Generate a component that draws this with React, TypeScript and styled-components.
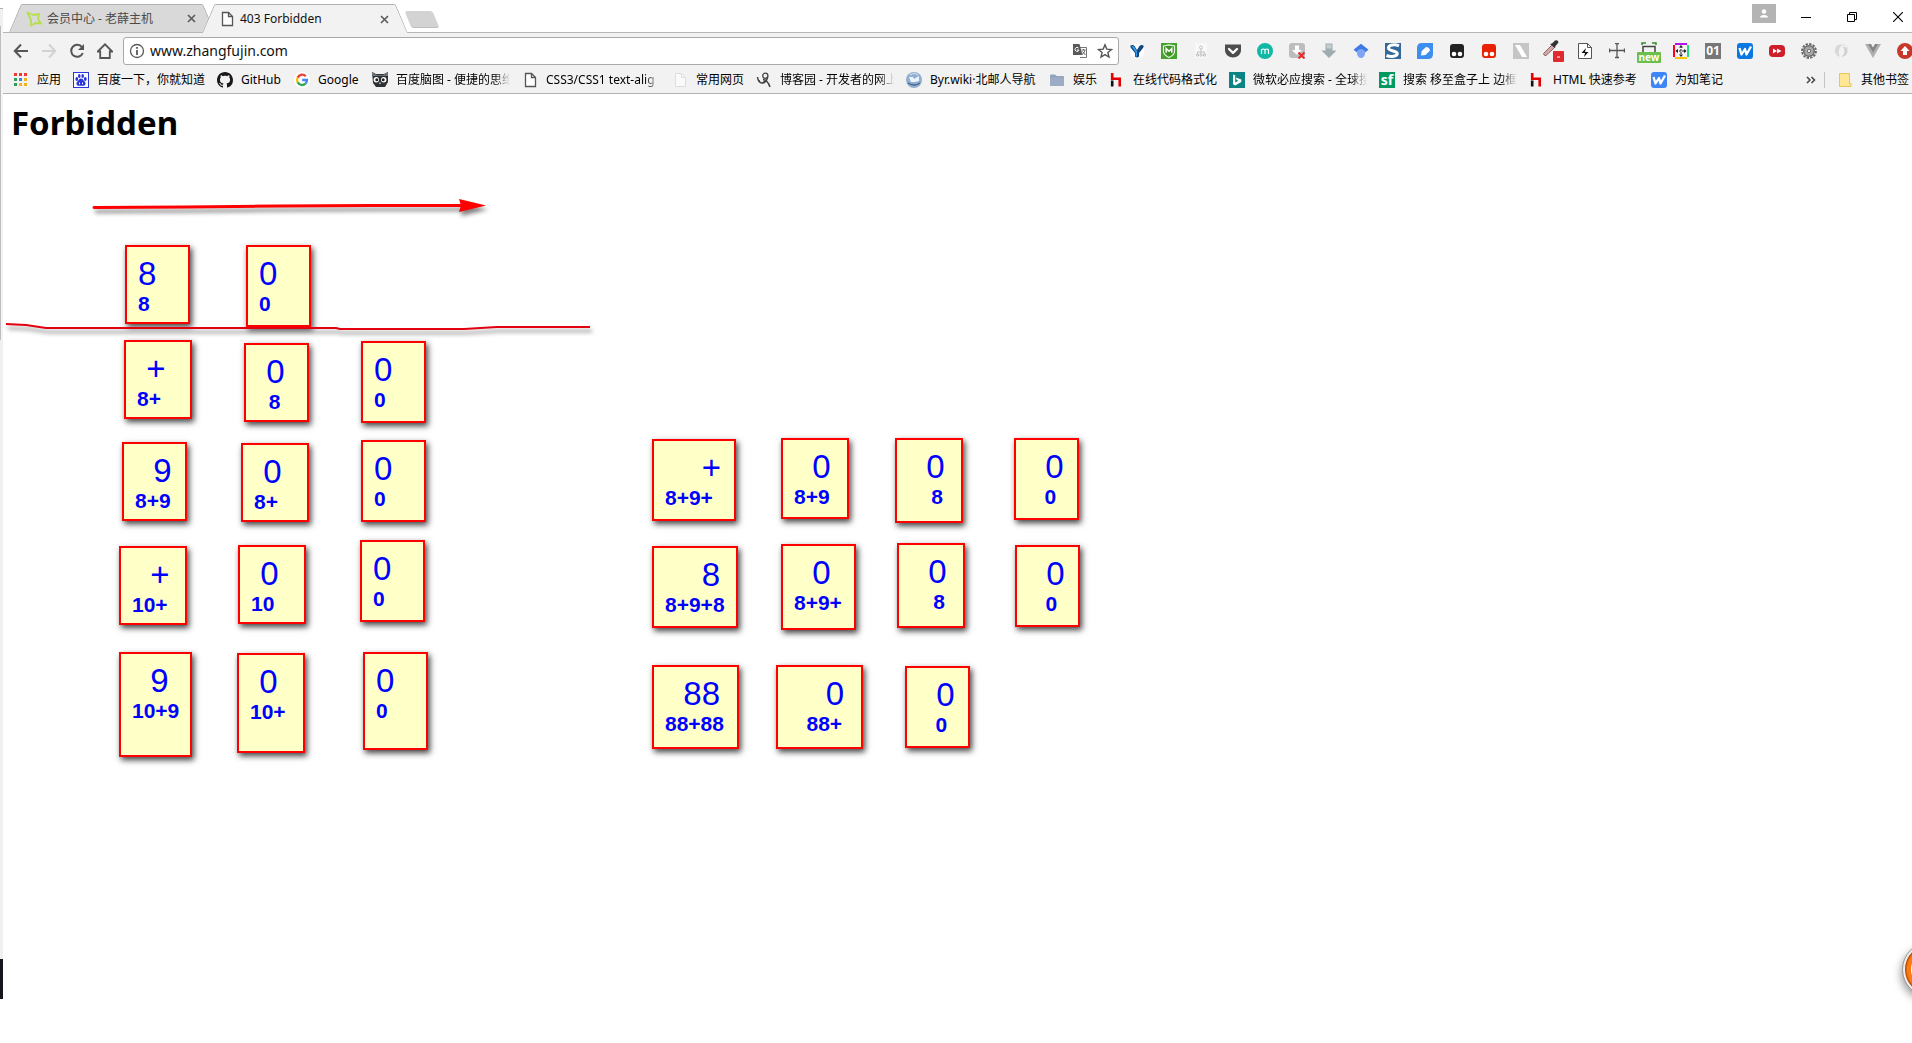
import React from "react";
import styled, { createGlobalStyle, css } from "styled-components";

const uiFont = `"Noto Sans", "Noto Sans CJK SC", sans-serif`;

const GlobalStyle = createGlobalStyle`
  * { box-sizing: border-box; }
  body { margin: 0; background: #fff; font-family: ${uiFont}; font-size: 12px; color: #000; }
  button { font: inherit; color: inherit; background: none; border: 0; padding: 0; }
`;

/* ---------- window frame ---------- */

const Page = styled.div`
  position: relative;
  display: flex;
  min-height: 100vh;
  overflow: hidden;
`;

const LeftEdge = styled.div`
  flex: none;
  width: 3px;
  display: flex;
  flex-direction: column;
`;

const EdgePart = styled.div<{ $h: number; $color: string; $line?: boolean }>`
  height: ${(p) => p.$h}px;
  background: ${(p) => p.$color};
  ${(p) => p.$line && css`border-left: 1px solid #bdbdbd;`}
`;

const Browser = styled.div`
  flex: 1;
  min-width: 0;
`;

/* ---------- tab strip ---------- */

const TabStrip = styled.header`
  display: flex;
  align-items: flex-start;
  height: 33px;
  padding: 4px 9px 0 6px;
  border-bottom: 1px solid #b6b6b6;
`;

const Tab = styled.div<{ $active?: boolean }>`
  position: relative;
  isolation: isolate;
  z-index: ${(p) => (p.$active ? 2 : 1)};
  display: flex;
  align-items: center;
  width: 205px;
  height: ${(p) => (p.$active ? 29 : 28)}px;
  padding: 1px 18px 0 17px;
  color: ${(p) => (p.$active ? "#111" : "#4a4a4a")};
  & + & { margin-left: -12px; }
  &::before, &::after {
    content: "";
    position: absolute;
    z-index: -1;
    top: 0;
    bottom: 0;
    width: 50%;
    background: ${(p) => (p.$active ? "#f2f2f2" : "#d9d9d9")};
    border-top: 1px solid #b0b0b0;
  }
  &::before {
    left: 0;
    border-left: 1px solid #a9a9a9;
    border-top-left-radius: 2px;
    transform-origin: bottom left;
    transform: skewX(-23deg);
  }
  &::after {
    right: 0;
    border-right: 1px solid #a9a9a9;
    border-top-right-radius: 2px;
    transform-origin: bottom right;
    transform: skewX(23deg);
  }
`;

const TabTitle = styled.span`
  flex: 1;
  margin-left: 5px;
  line-height: 18px;
  white-space: nowrap;
`;

const TabClose = styled.button`
  display: flex;
  color: #5e5e5e;
`;

const NewTab = styled.button`
  width: 28px;
  height: 17px;
  margin: 7px 0 0 1px;
  background: #d3d3d3;
  border-bottom: 1px solid #bcbcbc;
  border-radius: 3px;
  transform: skewX(22deg);
`;

const WindowControls = styled.div`
  display: flex;
  align-items: flex-start;
  margin-left: auto;
`;

const UserButton = styled.button`
  display: flex;
  align-items: center;
  justify-content: center;
  width: 24px;
  height: 19px;
  margin-right: 25px;
  background: #b4b4b4;
`;

const WindowButtons = styled.div`
  display: flex;
  gap: 36px;
`;

const WindowButton = styled.button`
  display: flex;
  padding-top: 8px;
`;

/* ---------- toolbar ---------- */

const Toolbar = styled.div`
  display: flex;
  height: 32px;
  padding: 4px 0 0 4px;
  background: #f2f2f2;
`;

const NavButton = styled.button`
  display: flex;
  align-items: center;
  justify-content: center;
  width: 28px;
`;

const AddressBar = styled.div`
  flex: 1;
  display: flex;
  align-items: center;
  height: 28px;
  margin-left: 4px;
  margin-right: 2px;
  padding: 0 5px;
  background: #fff;
  border: 1px solid #a9a9a9;
  border-radius: 3px;
`;

const AddressInput = styled.input`
  flex: 1;
  min-width: 0;
  height: 24px;
  padding: 0;
  margin-left: 5px;
  border: 0;
  outline: 0;
  background: transparent;
  font: 14px/24px "Noto Sans", sans-serif;
  color: #111;
`;

const AddressAction = styled.button`
  display: flex;
  margin-left: 9px;
`;

const Extensions = styled.div`
  display: flex;
  margin-right: -9px;
`;

const ExtensionButton = styled.button`
  flex: none;
  display: flex;
  align-items: center;
  justify-content: center;
  width: 32px;
`;

/* ---------- bookmarks ---------- */

const BookmarkBar = styled.nav`
  display: flex;
  align-items: center;
  gap: 12px;
  height: 29px;
  padding: 1px 0 0 10px;
  background: #f2f2f2;
  border-bottom: 1px solid #b3b3b3;
`;

const Bookmark = styled.a`
  flex: none;
  display: flex;
  align-items: center;
  gap: 8px;
  color: #000;
  text-decoration: none;
`;

const BookmarkLabel = styled.span<{ $w: number }>`
  width: ${(p) => p.$w}px;
  line-height: 18px;
  white-space: nowrap;
  ${(p) => p.$w > 112 && css`
    overflow: hidden;
    mask-image: linear-gradient(to right, #000 86%, transparent 100%);
  `}
`;

const MoreButton = styled.button`
  display: flex;
  margin-left: auto;
  margin-right: -4px;
`;

const Divider = styled.span`
  width: 1px;
  height: 16px;
  background: #c4c4c4;
`;

/* ---------- page content ---------- */

const Content = styled.main`
  padding: 5px 8px;
`;

const Title = styled.h1`
  margin: 0;
  font: bold 33px/48px "Noto Sans", sans-serif;
`;

const AnnotationLayer = styled.div`
  position: absolute;
  inset: 0;
  pointer-events: none;
`;

const Strokes = styled.svg`
  position: absolute;
  left: 0;
  top: 0;
  filter: drop-shadow(2px 4px 2px rgba(0, 0, 0, 0.5));
`;

const Card = styled.div<{ $x: number; $y: number; $w: number; $h: number }>`
  position: absolute;
  left: ${(p) => p.$x}px;
  top: ${(p) => p.$y}px;
  width: ${(p) => p.$w}px;
  height: ${(p) => p.$h}px;
  padding: 9px 11px;
  border: 2px solid #f00;
  background: #ffffc8;
  box-shadow: 2px 3px 6px rgba(0, 0, 0, 0.75);
  color: #00f;
  font-family: "Liberation Sans", sans-serif;
  white-space: pre;
`;

const Current = styled.div`
  font-size: 33px;
  line-height: 36px;
`;

const History = styled.div`
  font-size: 21px;
  font-weight: bold;
  line-height: 24px;
`;

const FloatingBall = styled.button`
  position: absolute;
  right: -44px;
  top: 943px;
  width: 53px;
  height: 53px;
  border: 2px solid #eee;
  border-radius: 50%;
  outline: 1px solid #999;
  background: radial-gradient(circle, #fff 0 18px, #ff7a0f 19px 22px, #b94d00 24px);
  box-shadow: -2px 4px 9px rgba(0, 0, 0, 0.4);
`;

/* ---------- icons ---------- */

const Icon = ({ children, size = 16, w, h }: { children: React.ReactNode; size?: number; w?: number; h?: number }) => (
  <svg width={w ?? size} height={h ?? size} viewBox={`0 0 ${w ?? size} ${h ?? size}`} fill="none" aria-hidden="true">
    {children}
  </svg>
);

const PageIcon = ({ pale }: { pale?: boolean }) => (
  <Icon>
    <path d="M3.5 1.5h6l4 4v9h-10z" fill={pale ? "#fafafa" : "#fff"} stroke={pale ? "#dedede" : "#555"} strokeWidth={pale ? 1 : 1.3} />
    <path d="M9.5 1.5v4h4" stroke={pale ? "#dedede" : "#555"} strokeWidth={pale ? 1 : 1.3} />
  </Icon>
);

const CloseGlyph = () => (
  <Icon size={9}><path d="M1 1l7 7M8 1L1 8" stroke="currentColor" strokeWidth="1.7" /></Icon>
);

const HIcon = () => (
  <Icon>
    <path d="M3.2 1v7" stroke="#e60000" strokeWidth="2.6" />
    <path d="M2 6.800h8.700v7.700" stroke="#e60000" strokeWidth="2.6" />
    <path d="M3.2 8.5V14.500" stroke="#111" strokeWidth="2.6" />
  </Icon>
);

const WIcon = ({ dark }: { dark?: boolean }) => (
  <Icon>
    <rect width="16" height="16" rx="3" fill={dark ? "#0a78e0" : "#3e86f7"} />
    <path d="M2.5 5l2 6.500L8 6l1.500 5.500L14 3.500" stroke="#fff" strokeWidth="2.300" strokeLinejoin="round" />
  </Icon>
);

const FolderIcon = ({ yellow }: { yellow?: boolean }) =>
  yellow ? (
    <Icon>
      <path d="M2.500 1.500h10v10h1.500v3h-11.500z" fill="#ffe694" stroke="#e6c55a" />
    </Icon>
  ) : (
    <Icon>
      <path d="M1 3.500q0-1 1-1h4l1.500 1.500H14q1 0 1 1v8q0 1-1 1H2q-1 0-1-1z" fill="#93a3bd" />
      <path d="M1 5.500h14v7.500q0 1-1 1H2q-1 0-1-1z" fill="#9cacc5" />
    </Icon>
  );

const bookmarks: { label: string; w: number; icon: React.ReactNode }[] = [
  {
    label: "应用", w: 24,
    icon: (
      <Icon>
        {["#ee3a32", "#ee3a32", "#ee3a32", "#2f9e58", "#3b83ee", "#f3b51d", "#2f9e58", "#f3b51d", "#f3b51d"].map((c, i) => (
          <rect key={i} x={1 + (i % 3) * 5} y={1 + Math.floor(i / 3) * 5} width="3" height="3" fill={c} />
        ))}
      </Icon>
    ),
  },
  {
    label: "百度一下，你就知道", w: 108,
    icon: (
      <Icon>
        <rect x=".5" y=".5" width="15" height="15" fill="#fff" stroke="#2b35dc" />
        <g fill="#2b35dc">
          <ellipse cx="3.800" cy="7" rx="1.400" ry="1.900" /><ellipse cx="6.300" cy="4" rx="1.300" ry="1.900" />
          <ellipse cx="9.700" cy="4" rx="1.300" ry="1.900" /><ellipse cx="12.300" cy="7" rx="1.400" ry="1.900" />
          <path d="M8 6.500c2 0 2.400 2 3.800 3.300 1.500 1.500.6 4-1.400 4H5.600c-2 0-2.900-2.500-1.400-4C5.600 8.500 6 6.500 8 6.500z" />
        </g>
        <path d="M6.500 10.500v1.700M9.500 10.500v1.700" stroke="#fff" />
      </Icon>
    ),
  },
  {
    label: "GitHub", w: 41,
    icon: (
      <Icon>
        <path fill="#1b1817" d="M8 0C3.580 0 0 3.580 0 8c0 3.540 2.290 6.530 5.470 7.590.4.070.55-.17.55-.38 0-.19-.010-.82-.010-1.490-2.010.37-2.530-.49-2.690-.94-.09-.23-.48-.94-.82-1.130-.28-.15-.68-.52-.010-.53.63-.010 1.080.58 1.230.82.72 1.210 1.870.87 2.330.66.070-.52.28-.87.510-1.070-1.780-.2-3.640-.89-3.640-3.950 0-.87.31-1.590.82-2.150-.080-.2-.36-1.020.080-2.120 0 0 .67-.21 2.200.82.64-.18 1.320-.27 2-.27s1.360.09 2 .27c1.530-1.040 2.200-.82 2.200-.82.44 1.100.16 1.920.08 2.120.51.56.82 1.270.82 2.150 0 3.070-1.870 3.750-3.650 3.950.29.25.54.73.54 1.480 0 1.070-.010 1.930-.010 2.200 0 .21.15.46.55.38A8.010 8.010 0 0016 8c0-4.420-3.580-8-8-8z" />
      </Icon>
    ),
  },
  {
    label: "Google", w: 42,
    icon: (
      <Icon>
        <circle cx="8" cy="8" r="8" fill="#fff" />
        <g strokeWidth="2.300">
          <path d="M11.800 4.200A5 5 0 003.600 5.700" stroke="#ea4335" />
          <path d="M3.600 5.700a5 5 0 000 4.600" stroke="#fbbc05" />
          <path d="M3.600 10.300a5 5 0 007.900 1.300" stroke="#34a853" />
          <path d="M11.500 11.600A5 5 0 0013 8H8.200" stroke="#4285f4" />
        </g>
      </Icon>
    ),
  },
  {
    label: "百度脑图 - 便捷的思维", w: 114,
    icon: (
      <Icon>
        <path d="M0 0l4 2h8l4-2v10l-3 5H4L1 11z" fill="#2f3235" />
        <path d="M0 0l5 3h6l5-3v4H0z" fill="#6b7378" />
        <circle cx="4.300" cy="7.800" r="2.700" fill="#fff" /><circle cx="11.700" cy="7.800" r="2.700" fill="#fff" />
        <circle cx="4.800" cy="7.800" r="1.500" fill="#222" /><circle cx="11.200" cy="7.800" r="1.500" fill="#222" />
        <path d="M8 10l1.200 1.800H6.800z" fill="#ddd" />
      </Icon>
    ),
  },
  { label: "CSS3/CSS1 text-alig", w: 114, icon: <PageIcon /> },
  { label: "常用网页", w: 48, icon: <PageIcon pale /> },
  {
    label: "博客园 - 开发者的网上", w: 114,
    icon: (
      <Icon>
        <circle cx="9.300" cy="3.700" r="2.600" stroke="#444" strokeWidth="1.300" />
        <path d="M1.500 5c.5 4 2 6 4.500 6 3 0 5-3 5.800-6.500M7 7.500c3 .5 5.500 3 7 7.500M3 8c.5 3 3 4 5.500 1.500" stroke="#444" strokeWidth="1.500" />
      </Icon>
    ),
  },
  {
    label: "Byr.wiki·北邮人导航", w: 107,
    icon: (
      <Icon>
        <circle cx="8" cy="8" r="8" fill="#8faed0" />
        <path d="M3 5h4l1 2 5-3v5l-4 1H5z" fill="#eef4fb" />
        <path d="M2 11q6 4 12 0" stroke="#44638b" strokeWidth="1.500" />
        <path d="M4 3q4-3 8 0" stroke="#d5e3f2" strokeWidth="1.200" />
      </Icon>
    ),
  },
  { label: "娱乐", w: 24, icon: <FolderIcon /> },
  { label: "在线代码格式化", w: 84, icon: <HIcon /> },
  {
    label: "微软必应搜索 - 全球搜", w: 114,
    icon: (
      <Icon>
        <rect width="16" height="16" fill="#0c8484" />
        <path d="M4 2.500l2.200.8v7.200l3.300-1.800-1.800-.8-.9-2.300 5.500 1.900v2.500L6.200 13.500 4 12.300z" fill="#fff" />
      </Icon>
    ),
  },
  {
    label: "搜索 移至盒子上 边框", w: 114,
    icon: (
      <Icon>
        <rect width="16" height="16" fill="#009a61" />
        <text x="8" y="13" textAnchor="middle" fontSize="14" fontWeight="bold" fill="#fff">sf</text>
      </Icon>
    ),
  },
  { label: "HTML 快速参考", w: 86, icon: <HIcon /> },
  { label: "为知笔记", w: 48, icon: <WIcon /> },
];

const extensions: { name: string; icon: React.ReactNode }[] = [
  {
    name: "Y", icon: (
      <Icon>
        <circle cx="8" cy="8" r="7.500" fill="#fdfdfd" />
        <path d="M1.500 2.500q3-1 4 .5L8 7l2.500-4q1.500-1.500 4-.5.5 1-.5 2.500L10 10v3.500q-2 2-4 0V10L2 5q-1-1.500-.5-2.500z" fill="#11447f" />
        <path d="M2.500 3.200q2-.5 3 1L8 8v5.500q-1 .2-1.300-.5V9.500z" fill="#2f9ae8" />
      </Icon>
    ),
  },
  {
    name: "WebAdvisor", icon: (
      <Icon>
        <rect width="16" height="16" fill="#44a32c" />
        <path d="M2.500 3L8 1.800 13.500 3v5.500c0 3-2.500 4.500-5.500 6-3-1.500-5.500-3-5.500-6z" fill="#3c9425" stroke="#e9f6e4" strokeWidth="1.200" />
        <path d="M5.200 9.800V5.500L8 8.200l2.800-2.700v4.300" stroke="#fff" strokeWidth="1.500" />
      </Icon>
    ),
  },
  {
    name: "Sitemap", icon: (
      <Icon>
        <rect x="2" width="12" height="15" fill="#f8f8f8" />
        <path d="M8 6v3M4.500 11V9h7v2M8 9v2" stroke="#c4c4c4" />
        <circle cx="8" cy="4.500" r="1.500" stroke="#c4c4c4" />
        <path d="M3.500 11h2v2h-2zM7 11h2v2H7zM10.500 11h2v2h-2z" stroke="#c4c4c4" />
      </Icon>
    ),
  },
  {
    name: "Pocket", icon: (
      <Icon>
        <path d="M0 1.500h16v6a8 7 0 01-16 0z" fill="#4d4d4d" />
        <path d="M4 6l4 3.800L12 6" stroke="#fff" strokeWidth="2.300" strokeLinecap="round" strokeLinejoin="round" />
      </Icon>
    ),
  },
  {
    name: "Momentum", icon: (
      <Icon>
        <circle cx="8" cy="8" r="8" fill="#11b8a3" />
        <path d="M4.500 11V6m0 2q0-2 1.800-2T8 8v3m0-3q0-2 1.800-2t1.700 2v3" stroke="#fff" strokeWidth="1.200" />
      </Icon>
    ),
  },
  {
    name: "Downloader", icon: (
      <Icon>
        <rect width="16" height="15" rx="3" fill="#bdbdbd" />
        <path d="M6 2.500h4V7h3l-5 5-5-5h3z" fill="#fff" />
        <path d="M9.500 9.500l6 6M15.500 9.500l-6 6" stroke="#e52d2d" strokeWidth="2" />
      </Icon>
    ),
  },
  {
    name: "Download", icon: (
      <Icon>
        <path d="M4.500.5h7V7.500h4L8 15 .5 7.500h4z" fill="#9fadb0" />
        <path d="M5.500 1.500h5v4h-5z" fill="#c3ced0" />
      </Icon>
    ),
  },
  {
    name: "Scholar", icon: (
      <Icon>
        <path d="M8 .8l7.500 6L8 12.500.5 6.800z" fill="#3f79e8" />
        <path d="M4 8q4-4 8 0v3q-1 4-4 4t-4-4z" fill="#7ea6f3" />
      </Icon>
    ),
  },
  {
    name: "Stylish", icon: (
      <Icon>
        <rect width="16" height="16" fill="#33699a" />
        <path d="M14 2.800C10 1 3.500 1.500 3.500 5S12.300 7.500 12.300 10.500 6 14.200 1.500 12.500" stroke="#fff" strokeWidth="3" />
      </Icon>
    ),
  },
  {
    name: "Note", icon: (
      <Icon>
        <path d="M5 0h11v11q0 5-5 5H0V5q0-5 5-5z" fill="#3e8ef0" />
        <path d="M4 12.500l.7-4.500L9 4q3.500 0 4 3.500L8.500 12z" fill="#fff" />
      </Icon>
    ),
  },
  ...["#222", "#ea2100"].map((c) => ({
    name: "Tampermonkey " + c, icon: (
      <Icon>
        <rect x="1" y="1" width="14" height="14" rx="3" fill={c} />
        <circle cx="5" cy="11" r="2.300" fill="#fff" /><circle cx="11" cy="11" r="2.300" fill="#fff" />
      </Icon>
    ),
  })),
  {
    name: "Slash", icon: (
      <Icon><rect width="16" height="16" fill="#c5c5c5" /><path d="M2 2h5l7 12H9z" fill="#fff" /></Icon>
    ),
  },
  {
    name: "Color picker", icon: (
      <Icon w={22} h={22}>
        <path d="M1.500 13.500L10 5l2.500 2.500-8.500 8q-2 .5-2.500-2z" fill="#d6a9a5" stroke="#8a6765" />
        <path d="M8 4l2-.5 3-3q3-1 3.500 2l-3 3.500-.5 2z" fill="#333" />
        <rect x="11" y="11" width="11" height="11" rx="1" fill="#df2a2f" />
        <path d="M15 17h3" stroke="#fff" />
      </Icon>
    ),
  },
  {
    name: "Lightning page", icon: (
      <Icon>
        <path d="M1.500.5h9l4 4v11h-13z" fill="#fff" stroke="#555" /><path d="M10.500.5v4h4" stroke="#555" />
        <path d="M9 5L4.500 10H8l-1 4 4.500-5H8z" fill="#111" />
      </Icon>
    ),
  },
  {
    name: "Crosshair", icon: (
      <Icon>
        <path d="M6 .5h4M6 14.500h4M.5 5.500v4M15.500 5.500v4M8 .5v14M.5 7.500h15" stroke="#555" strokeWidth="1.300" />
      </Icon>
    ),
  },
  {
    name: "Window resizer", icon: (
      <Icon w={24} h={24}>
        <path d="M5 6V4h4M15 4h4v2" stroke="#2d8a2d" strokeWidth="1.500" />
        <path d="M6 13V7.500h12V13" stroke="#444" strokeWidth="1.500" />
        <rect y="13" width="24" height="11" rx="1" fill="#6cbf4b" />
        <text x="12" y="22" textAnchor="middle" fontSize="10" fontWeight="bold" fill="#fff">new</text>
      </Icon>
    ),
  },
  {
    name: "Page ruler", icon: (
      <Icon>
        <path d="M2 1h12" stroke="#b414e8" strokeWidth="2" /><path d="M1 2v12" stroke="#f02" strokeWidth="2" />
        <path d="M15 2v12" stroke="#1be07a" strokeWidth="2" /><path d="M2 15h12" stroke="#ffc400" strokeWidth="2" />
        <path d="M8 3v10M3 8h10" stroke="#222" strokeWidth="1" strokeDasharray="2 1" />
        <path d="M8 2l2 2.500H6zM8 14l2-2.500H6zM2.500 8L5 6v4zM13.500 8L11 6v4z" fill="#222" />
      </Icon>
    ),
  },
  {
    name: "Counter", icon: (
      <Icon>
        <rect width="16" height="16" fill="#777" />
        <text x="8" y="12" textAnchor="middle" fontSize="12" fontWeight="bold" fill="#fff">01</text>
      </Icon>
    ),
  },
  { name: "WizNote", icon: <WIcon dark /> },
  {
    name: "Video", icon: (
      <Icon>
        <rect y="2" width="16" height="12" rx="4" fill="#cc1f2a" />
        <path d="M4 5.500l4 2.500-4 2.500zM8 5.500l4.500 2.500L8 10.500z" fill="#fff" />
      </Icon>
    ),
  },
  {
    name: "Gear", icon: (
      <Icon>
        <circle cx="8" cy="8" r="7" stroke="#666" strokeWidth="1.800" strokeDasharray="2.400 1.260" />
        <circle cx="8" cy="8" r="5.300" fill="#bdbdbd" stroke="#666" strokeWidth="1.500" />
        <circle cx="8" cy="8" r="3.500" stroke="#999" />
        <circle cx="8" cy="8" r="1.800" fill="#eee" stroke="#666" />
      </Icon>
    ),
  },
  {
    name: "Rings", icon: (
      <Icon>
        <path d="M9 1.500a6.200 6.200 0 00-2 12.300q-3.500-5 2-12.300z" fill="#d8d8d8" />
        <path d="M9.500 4q4.500-.5 5 3.500 0 5.500-6.500 6.500 4-3 3.500-6 0-2.500-2-4z" fill="#cfcfcf" />
        <path d="M8 2q5-1 6.500 4" stroke="#ddd" />
      </Icon>
    ),
  },
  {
    name: "Vue", icon: (
      <Icon><path d="M0 1h5l3 5 3-5h5L8 15z" fill="#b0b0b0" /><path d="M3 1h3l2 3.500L10 1h3L8 9.500z" fill="#858585" /></Icon>
    ),
  },
  {
    name: "Upload", icon: (
      <Icon>
        <circle cx="8" cy="8" r="8" fill="#c7382b" />
        <path d="M8 3l4.500 5H10v4H6V8H3.500z" fill="#fff" />
      </Icon>
    ),
  },
];

/* ---------- diagram data: x, y, width, height, current, history ---------- */

type CardData = [number, number, number, number, string, string];

const cards: CardData[] = [
  [125, 245, 65, 79, "8", "8"],
  [246, 245, 65, 82, "0", "0"],
  [124, 340, 68, 79, " +", "8+"],
  [244, 343, 65, 79, " 0", "  8"],
  [361, 341, 65, 82, "0", "0"],
  [122, 442, 65, 79, "  9", "8+9"],
  [241, 443, 68, 79, " 0", "8+"],
  [361, 440, 65, 82, "0", "0"],
  [119, 546, 68, 79, "  +", "10+"],
  [238, 545, 68, 79, " 0", "10"],
  [360, 540, 65, 82, "0", "0"],
  [119, 652, 73, 105, "  9", "10+9"],
  [237, 653, 68, 100, " 0", "10+"],
  [363, 652, 65, 98, "0", "0"],
  [652, 439, 84, 82, "    +", "8+9+"],
  [781, 438, 68, 81, "  0", "8+9"],
  [895, 438, 68, 85, "  0", "    8"],
  [1014, 438, 65, 82, "  0", "   0"],
  [652, 546, 86, 82, "    8", "8+9+8"],
  [781, 544, 75, 86, "  0", "8+9+"],
  [897, 543, 68, 85, "  0", "    8"],
  [1015, 545, 65, 82, "  0", "   0"],
  [652, 665, 87, 84, "  88", "88+88"],
  [776, 665, 87, 84, "    0", "   88+"],
  [905, 666, 65, 82, "  0", "   0"],
];

export default function App() {
  return (
    <>
      <GlobalStyle />
      <Page>
        <LeftEdge>
          <EdgePart $h={8} $color="#fff" />
          <EdgePart $h={1} $color="#b0b0b0" />
          <EdgePart $h={17} $color="#f0f0f0" />
          <EdgePart $h={314} $color="#f4f4f4" $line />
          <EdgePart $h={619} $color="#f0f0f0" />
          <EdgePart $h={40} $color="#15151b" />
        </LeftEdge>
        <Browser>
          <TabStrip>
            <Tab>
              <Icon>
                <path d="M1.500 1.500l6 2.500 5.500-1-1 5 3 4.500-5.500-.5L5 14.500 5 9z" stroke="#b5e04a" strokeWidth="1.800" strokeLinejoin="round" />
              </Icon>
              <TabTitle>会员中心 - 老薛主机</TabTitle>
              <TabClose aria-label="Close tab"><CloseGlyph /></TabClose>
            </Tab>
            <Tab $active>
              <PageIcon />
              <TabTitle>403 Forbidden</TabTitle>
              <TabClose aria-label="Close tab"><CloseGlyph /></TabClose>
            </Tab>
            <NewTab aria-label="New tab" />
            <WindowControls>
              <UserButton aria-label="User">
                <Icon w={10} h={10}><circle cx="5" cy="2.500" r="2.200" fill="#fff" /><path d="M1 8.500q0-2.500 4-2.500t4 2.500z" fill="#fff" /></Icon>
              </UserButton>
              <WindowButtons>
                <WindowButton aria-label="Minimize"><Icon size={10}><path d="M0 5.500h10" stroke="#000" /></Icon></WindowButton>
                <WindowButton aria-label="Restore">
                  <Icon size={10}><path d="M.5 2.500h7v7h-7zM2.500 2.500v-2h7v7h-2" stroke="#000" /></Icon>
                </WindowButton>
                <WindowButton aria-label="Close"><Icon size={10}><path d="M0 0l10 10M10 0L0 10" stroke="#000" strokeWidth="1.100" /></Icon></WindowButton>
              </WindowButtons>
            </WindowControls>
          </TabStrip>

          <Toolbar>
            <NavButton aria-label="Back">
              <Icon><path d="M15 8H2M8 1.500L1.800 8 8 14.500" stroke="#555" strokeWidth="2" /></Icon>
            </NavButton>
            <NavButton aria-label="Forward">
              <Icon><path d="M1 8h13M8 1.500L14.200 8 8 14.500" stroke="#d2d2d2" strokeWidth="2" /></Icon>
            </NavButton>
            <NavButton aria-label="Reload">
              <Icon><path d="M13 4.200A6 6 0 1013.800 10" stroke="#555" strokeWidth="2" /><path d="M15 1v6H9z" fill="#555" /></Icon>
            </NavButton>
            <NavButton aria-label="Home">
              <Icon><path d="M.8 8.500L8 1.300l7.200 7.200h-2.400V15H3.200V8.500z" stroke="#555" strokeWidth="1.800" /></Icon>
            </NavButton>
            <AddressBar>
              <Icon>
                <circle cx="8" cy="8" r="6.500" stroke="#5a5a5a" strokeWidth="1.300" />
                <path d="M8 7v5M8 4v1.800" stroke="#5a5a5a" strokeWidth="1.800" />
              </Icon>
              <AddressInput aria-label="Address" defaultValue="www.zhangfujin.com" />
              <AddressAction aria-label="Translate">
                <Icon>
                  <path d="M7 4.500h7.500v10H8" fill="#fff" stroke="#777" />
                  <path d="M1 1h6.500l3 11H1z" fill="#5a5a5a" />
                  <path d="M6.500 5A2 2 0 107 7H5" stroke="#fff" />
                  <path d="M9.500 7h4M11.500 6v1M13 7q-.5 3-3 4.500M10.500 8.500l3 3.500" stroke="#666" />
                </Icon>
              </AddressAction>
              <AddressAction aria-label="Bookmark this page">
                <Icon><path d="M8 1.800l1.800 4.300 4.700.4-3.600 3 1.100 4.600L8 11.600l-4 2.500 1.100-4.600-3.600-3 4.700-.4z" stroke="#555" strokeWidth="1.400" /></Icon>
              </AddressAction>
            </AddressBar>
            <Extensions>
              {extensions.map((e) => (
                <ExtensionButton key={e.name} aria-label={e.name}>{e.icon}</ExtensionButton>
              ))}
            </Extensions>
          </Toolbar>

          <BookmarkBar aria-label="Bookmarks">
            {bookmarks.map((b) => (
              <Bookmark key={b.label} href="#">
                {b.icon}
                <BookmarkLabel $w={b.w}>{b.label}</BookmarkLabel>
              </Bookmark>
            ))}
            <MoreButton aria-label="More bookmarks">
              <Icon size={10}><path d="M1 2l3 3-3 3M5.500 2l3 3-3 3" stroke="#444" strokeWidth="1.500" /></Icon>
            </MoreButton>
            <Divider />
            <Bookmark href="#">
              <FolderIcon yellow />
              <BookmarkLabel $w={51}>其他书签</BookmarkLabel>
            </Bookmark>
          </BookmarkBar>

          <Content>
            <Title>Forbidden</Title>
          </Content>
        </Browser>

        <AnnotationLayer>
          {cards.map(([x, y, w, h, current, history]) => (
            <Card key={`${x}-${y}`} $x={x} $y={y} $w={w} $h={h}>
              <Current>{current}</Current>
              <History>{history}</History>
            </Card>
          ))}
          <Strokes width="620" height="350" viewBox="0 0 620 350" fill="none" aria-hidden="true">
            <path d="M94 207.500L186 207l93-1 93-.5h90" stroke="#f00" strokeWidth="3" strokeLinecap="round" />
            <path d="M459 199l27 6.500-27 6.500 2-6.500z" fill="#f00" />
            <path d="M6 324l20 1 20 3h290l4 1h124l33-2h93" stroke="#e3000f" strokeWidth="2" />
          </Strokes>
        </AnnotationLayer>
        <FloatingBall aria-label="Assistant" />
      </Page>
    </>
  );
}
